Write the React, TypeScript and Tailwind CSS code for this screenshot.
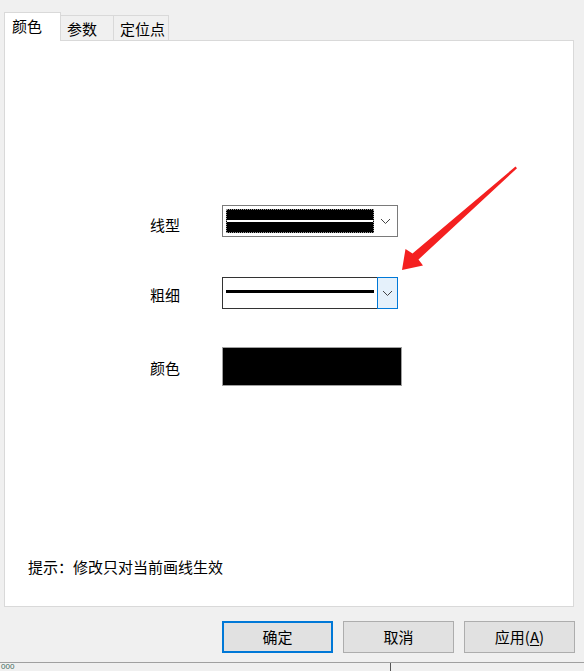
import React from "react"

const font = "font-['Microsoft_YaHei','Noto_Sans_CJK_SC',sans-serif]"

function Chevron() {
  return (
    <svg width="11" height="7" viewBox="0 0 11 7">
      <polyline points="1,1 5.5,5.5 10,1" fill="none" stroke="#444" strokeWidth="1" />
    </svg>
  )
}

function Tab({ label, active }: { label: string; active?: boolean }) {
  if (active) {
    return (
      <div className="relative z-10 -mb-px flex h-[29px] w-[57px] items-center border-x border-t border-[#d9d9d9] bg-white pb-[2px] pl-[7px]">
        {label}
      </div>
    )
  }
  return (
    <div className="flex h-[25px] items-center border-r border-t border-[#d9d9d9] bg-[#f0f0f0] pl-[6px] pr-[3px] pt-[1px]">
      {label}
    </div>
  )
}

function Button({ children, primary }: { children: React.ReactNode; primary?: boolean }) {
  return (
    <button
      className={
        primary
          ? "flex h-[32px] w-[111px] items-center justify-center border-2 border-[#0078d7] bg-[#e1e1e1]"
          : "flex h-[32px] w-[111px] items-center justify-center border border-[#adadad] bg-[#e1e1e1]"
      }
    >
      {children}
    </button>
  )
}

export default function App() {
  return (
    <div className={`relative flex h-[671px] w-[584px] flex-col overflow-hidden bg-[#f0f0f0] text-[15px] leading-[20px] text-black ${font}`}>
      {/* tabs */}
      <div className="mt-[12px] flex h-[28px] items-end pl-[4px]">
        <Tab label="颜色" active />
        <div className="w-[53px]">
          <Tab label="参数" />
        </div>
        <div className="w-[55px]">
          <Tab label="定位点" />
        </div>
      </div>

      {/* panel */}
      <div className="ml-[4px] flex h-[567px] w-[570px] flex-col border border-[#d9d9d9] bg-white">
        {/* line style */}
        <div className="mt-[164px] flex pl-[145px]">
          <div className="mt-[10px] w-[72px]">线型</div>
          <div className="flex h-[32px] w-[176px] items-center border border-[#7a7a7a] bg-white pl-[3px]">
            <div className="flex h-[24px] w-[148px] flex-col border border-dotted border-[#9a9a9a] bg-black">
              <div className="mt-[10px] h-[2px] w-full bg-white" />
            </div>
            <div className="flex flex-1 items-center justify-center pt-px">
              <Chevron />
            </div>
          </div>
        </div>

        {/* thickness */}
        <div className="mt-[40px] flex pl-[145px]">
          <div className="mt-[8px] w-[72px]">粗细</div>
          <div className="flex h-[32px] w-[176px]">
            <div className="flex w-[155px] flex-col border-y border-l border-[#333] pl-[3px]">
              <div className="mt-[12px] h-[3px] w-[148px] bg-black" />
            </div>
            <div className="flex w-[21px] items-center justify-center border border-[#0078d7] bg-[#e5f1fb]">
              <Chevron />
            </div>
          </div>
        </div>

        {/* colour */}
        <div className="mt-[38px] flex pl-[145px]">
          <div className="mt-[11px] w-[72px]">颜色</div>
          <div className="h-[39px] w-[180px] border border-[#a0a0a0] bg-black" />
        </div>

        <div className="mt-[171px] pl-[23px]">提示：修改只对当前画线生效</div>
      </div>

      {/* buttons */}
      <div className="mt-[14px] flex gap-[10px] pl-[222px]">
        <Button primary>确定</Button>
        <Button>取消</Button>
        <Button>
          应用(<span className="underline underline-offset-2">A</span>)
        </Button>
      </div>

      {/* window behind */}
      <div className="mt-[9px] flex h-[9px] border-t border-[#a0a0a0] bg-[#f0f0f0]">
        <div className="w-[391px] border-r border-[#555] pl-px">
          <div className="font-['Liberation_Sans',sans-serif] text-[8px] leading-[8px] text-[#3f6b5e]">000</div>
        </div>
      </div>

      {/* annotation arrow */}
      <svg className="pointer-events-none absolute inset-0" width="584" height="671" viewBox="0 0 584 671">
        <polygon
          points="402,270 405.5,249 412.5,253.5 515.5,166.5 517,168.2 418.5,259.5 423,265.5"
          fill="#f42020"
        />
      </svg>
    </div>
  )
}
